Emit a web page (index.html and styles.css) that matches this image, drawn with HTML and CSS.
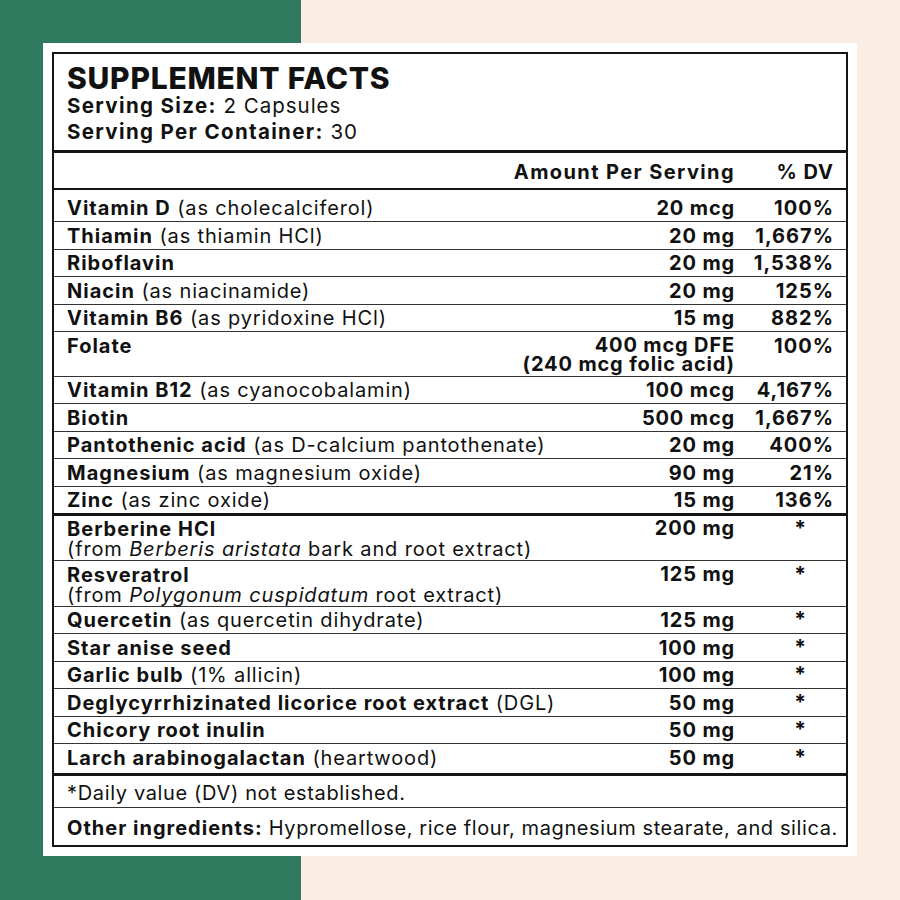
FILE: index.html
```html
<!DOCTYPE html>
<html lang="en">
<head>
<meta charset="utf-8">
<title>Supplement Facts</title>
<link rel="stylesheet" href="styles.css">
</head>
<body>
<div class="card">
  <div class="facts">
    <div class="head">
      <div class="title">SUPPLEMENT FACTS</div>
      <div class="serv"><b>Serving Size:</b> 2 Capsules</div>
      <div class="serv"><b>Serving Per Container:</b> 30</div>
    </div>
    <div class="colhead">
      <div class="name"></div>
      <div class="amt">Amount Per Serving</div>
      <div class="dv">% DV</div>
    </div>
    <div class="group">
      <div class="row"><div class="name"><b>Vitamin D</b> (as cholecalciferol)</div><div class="amt">20 mcg</div><div class="dv">100%</div></div>
      <div class="row"><div class="name"><b>Thiamin</b> (as thiamin HCl)</div><div class="amt">20 mg</div><div class="dv">1,667%</div></div>
      <div class="row"><div class="name"><b>Riboflavin</b></div><div class="amt">20 mg</div><div class="dv">1,538%</div></div>
      <div class="row"><div class="name"><b>Niacin</b> (as niacinamide)</div><div class="amt">20 mg</div><div class="dv">125%</div></div>
      <div class="row"><div class="name"><b>Vitamin B6</b> (as pyridoxine HCl)</div><div class="amt">15 mg</div><div class="dv">882%</div></div>
      <div class="row two"><div class="name"><b>Folate</b></div><div class="amt"><div>400 mcg DFE</div><div>(240 mcg folic acid)</div></div><div class="dv">100%</div></div>
      <div class="row"><div class="name"><b>Vitamin B12</b> (as cyanocobalamin)</div><div class="amt">100 mcg</div><div class="dv">4,167%</div></div>
      <div class="row"><div class="name"><b>Biotin</b></div><div class="amt">500 mcg</div><div class="dv">1,667%</div></div>
      <div class="row"><div class="name"><b>Pantothenic acid</b> (as D-calcium pantothenate)</div><div class="amt">20 mg</div><div class="dv">400%</div></div>
      <div class="row"><div class="name"><b>Magnesium</b> (as magnesium oxide)</div><div class="amt">90 mg</div><div class="dv">21%</div></div>
      <div class="row"><div class="name"><b>Zinc</b> (as zinc oxide)</div><div class="amt">15 mg</div><div class="dv">136%</div></div>
    </div>
    <div class="group">
      <div class="row two"><div class="name"><div><b>Berberine HCl</b></div><div>(from <i>Berberis aristata</i> bark and root extract)</div></div><div class="amt">200 mg</div><div class="dv"><span class="star">*</span></div></div>
      <div class="row two"><div class="name"><div><b>Resveratrol</b></div><div>(from <i>Polygonum cuspidatum</i> root extract)</div></div><div class="amt">125 mg</div><div class="dv"><span class="star">*</span></div></div>
      <div class="row"><div class="name"><b>Quercetin</b> (as quercetin dihydrate)</div><div class="amt">125 mg</div><div class="dv"><span class="star">*</span></div></div>
      <div class="row"><div class="name"><b>Star anise seed</b></div><div class="amt">100 mg</div><div class="dv"><span class="star">*</span></div></div>
      <div class="row"><div class="name"><b>Garlic bulb</b> (1% allicin)</div><div class="amt">100 mg</div><div class="dv"><span class="star">*</span></div></div>
      <div class="row"><div class="name"><b>Deglycyrrhizinated licorice root extract</b> (DGL)</div><div class="amt">50 mg</div><div class="dv"><span class="star">*</span></div></div>
      <div class="row"><div class="name"><b>Chicory root inulin</b></div><div class="amt">50 mg</div><div class="dv"><span class="star">*</span></div></div>
      <div class="row last"><div class="name"><b>Larch arabinogalactan</b> (heartwood)</div><div class="amt">50 mg</div><div class="dv"><span class="star">*</span></div></div>
    </div>
    <div class="note">*Daily value (DV) not established.</div>
    <div class="other"><b>Other ingredients:</b> Hypromellose, rice flour, magnesium stearate, and silica.</div>
  </div>
</div>
</body>
</html>
```

FILE: styles.css
```css
html, body {
  margin: 0;
  padding: 0;
}
body {
  width: 900px;
  height: 900px;
  background: linear-gradient(to right, #2f7a5f 0, #2f7a5f 301px, #f9ede4 301px, #f9ede4 100%);
  font-family: Inter, "Liberation Sans", Arial, sans-serif;
  color: #111;
  overflow: hidden;
}
.card {
  margin: 43px 0 0 43px;
  width: 814px;
  height: 813px;
  box-sizing: border-box;
  padding: 9px;
  background: #fff;
}
.facts {
  border: 2px solid #151515;
  height: 795px;
  box-sizing: border-box;
  display: flex;
  flex-direction: column;
}
b {
  font-weight: 700;
  letter-spacing: 1px;
}
.head {
  padding: 9px 13px 5px;
  border-bottom: 3px solid #151515;
}
.title {
  font-size: 30px;
  line-height: 30px;
  font-weight: 800;
  letter-spacing: 0.75px;
}
.serv {
  font-size: 20.5px;
  line-height: 26px;
  letter-spacing: 1px;
}
.serv b {
  letter-spacing: 1.35px;
}
.colhead {
  display: flex;
  padding: 6px 12px 2px 13px;
  font-size: 20px;
  line-height: 27px;
  font-weight: 700;
  letter-spacing: 1.2px;
  border-bottom: 2px solid #151515;
}
.name {
  flex: 1;
  min-width: 0;
  white-space: nowrap;
  letter-spacing: 0.85px;
}
.amt {
  flex: none;
  text-align: right;
  white-space: nowrap;
  letter-spacing: 0.85px;
}
.colhead .amt {
  letter-spacing: 1.4px;
}
.colhead .amt,
.row .amt {
  font-weight: 700;
}
.dv {
  flex: none;
  width: 99px;
  text-align: right;
  font-weight: 700;
  letter-spacing: 1px;
}
.group {
  border-bottom: 3px solid #151515;
}
.row {
  display: flex;
  padding: 3.5px 12px 3px 13px;
  font-size: 20px;
  line-height: 20px;
  border-top: 1px solid #333;
}
.row:first-child {
  border-top: none;
  padding-top: 8px;
}
.group + .group .row:first-child {
  padding-top: 3px;
}
.row.two {
  padding-bottom: 1px;
}
.row.last {
  padding-bottom: 5px;
}
.row.two .amt {
  line-height: 19.5px;
}
.star {
  display: inline-block;
  margin-right: 27px;
  font-size: 21px;
}
.note {
  padding: 6px 13px 3px;
  font-size: 20px;
  line-height: 22px;
  letter-spacing: 0.65px;
  border-bottom: 1px solid #333;
}
.other {
  padding: 9px 13px 0;
  font-size: 20px;
  line-height: 22px;
  letter-spacing: 0.6px;
  white-space: nowrap;
}
```
